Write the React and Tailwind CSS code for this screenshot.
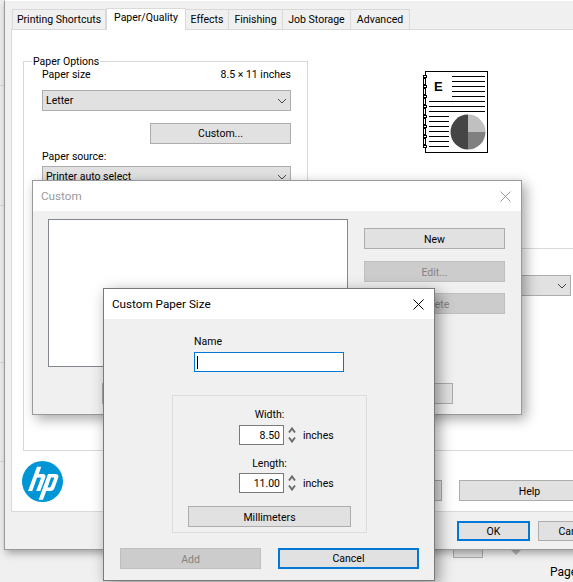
const Btn = ({ className = '', children }) => (
  <div className={`flex items-center justify-center shrink-0 h-[21px] pt-[2px] border border-[#adadad] bg-[#e1e1e1] text-black ${className}`}>
    {children}
  </div>
);

const OffBtn = ({ className = '', children }) => (
  <div className={`flex items-center justify-center shrink-0 h-[21px] pt-[2px] border border-[#bfbfbf] bg-[#cccccc] text-[#838383] ${className}`}>
    {children}
  </div>
);

const FocusBtn = ({ className = '', children }) => (
  <div className={`flex items-center justify-center shrink-0 pt-px border-2 border-[#0078d7] bg-[#e1e1e1] text-black ${className}`}>
    {children}
  </div>
);

const Chevron = () => (
  <svg width="10" height="6" viewBox="0 0 10 6" fill="none" stroke="#444" strokeWidth="1">
    <path d="M1 1l4 4 4-4" />
  </svg>
);

const Select = ({ className = '', children }) => (
  <div className={`flex items-center justify-between h-[21px] pl-[3px] pr-[3px] border border-[#adadad] bg-[#e1e1e1] ${className}`}>
    <span>{children}</span>
    <Chevron />
  </div>
);

const Close = ({ color }) => (
  <svg width="11" height="11" viewBox="0 0 11 11" fill="none" stroke={color} strokeWidth="1">
    <path d="M.5.5l10 10M10.5.5l-10 10" />
  </svg>
);

const Spinner = () => (
  <svg width="8" height="16" viewBox="0 0 8 16" fill="none" stroke="#6d6d6d" strokeWidth="2">
    <path d="M1 5.5l3-4 3 4M1 10.5l3 4 3-4" />
  </svg>
);

const PageIcon = () => {
  const top = [5, 10, 15, 20, 25];
  const wide = [30, 35, 40];
  const short = [45, 50, 55, 60, 65, 70, 75];
  const rings = [5, 15, 25, 35, 45, 55, 65, 75];
  return (
    <svg width="68" height="84" viewBox="0 0 68 84" shapeRendering="crispEdges">
      <rect x="3.5" y="0.5" width="62" height="81" fill="#fff" stroke="#000" />
      {top.map((y) => <path key={y} d={`M30 ${y + 0.5}h33`} stroke="#000" />)}
      {wide.map((y) => <path key={y} d={`M7 ${y + 0.5}h56`} stroke="#000" />)}
      {short.map((y) => <path key={y} d={`M7 ${y + 0.5}h20`} stroke="#000" />)}
      {rings.map((y) => <rect key={y} x="1.5" y={y - 0.5} width="3" height="2" fill="#fff" stroke="#000" />)}
      {rings.slice(0, -1).map((y) => <rect key={y} x="1.5" y={y + 2.5} width="2" height="6" fill="#fff" stroke="#000" />)}
      <text x="12" y="20" fontSize="13" fontWeight="700" fontFamily="'Liberation Sans', sans-serif" fill="#000">E</text>
      <g shapeRendering="auto">
        <path d="M46 61V43.5a17.5 17.5 0 0 0 0 35z" fill="#454545" />
        <path d="M46 43.5V61h17.5A17.5 17.5 0 0 0 46 43.5z" fill="#c0c0c0" />
        <path d="M46 61v17.5A17.5 17.5 0 0 0 63.5 61z" fill="#808080" />
      </g>
    </svg>
  );
};

const HpLogo = () => (
  <svg width="41" height="41" viewBox="0 0 41 41">
    <circle cx="20.5" cy="20.5" r="20.5" fill="#0096d6" />
    <path
      fill="#fff"
      d="M15 5.7h4.3L16.7 13h4.3c2 0 3 1.5 2.4 3.3L18.3 30h-4.1l4.6-12.5c.3-.9-.1-1-.8-1h-3L10.3 30H6z"
    />
    <path
      fill="#fff"
      fillRule="evenodd"
      d="M26 13h7c3 0 4 1.5 3.3 3.5L32.5 27c-.7 2-2 3-4 3h-4.3L21 38.7h-4.3zM29 16.5h2c1 0 1.3.5 1 1.3l-3.3 7.9c-.3.6-.7.8-1.4.8h-1.7z"
    />
  </svg>
);

const SizeRow = ({ value }) => (
  <div className="flex items-center pl-[66px]">
    <div className="flex items-center justify-end w-[45px] h-[20px] pt-px pr-[3px] border border-[#7a7a7a] bg-white">{value}</div>
    <div className="ml-[4px]"><Spinner /></div>
    <span className="ml-[7px] pt-[2px]">inches</span>
  </div>
);

export default function App() {
  return (
    <div className="relative w-[573px] h-[582px] overflow-hidden bg-[#f0f0f0] text-[10.5px] leading-4 text-black font-['Roboto','Noto_Sans',sans-serif]">
      {/* stuff behind the driver window */}
      <div className="absolute left-0 top-[85px] w-[4px] border-t border-[#d9d9d9]" />
      <div className="absolute left-0 top-[205px] w-[4px] border-t border-[#d9d9d9]" />
      <div className="absolute left-0 top-[362px] w-[4px] border-t border-[#d9d9d9]" />
      <div className="absolute left-0 top-[461px] w-[4px] border-t border-[#d9d9d9]" />
      <div className="absolute left-[453px] top-[540px] w-[30px] h-[18px] border border-[#adadad] bg-[#e1e1e1]" />
      <div className="absolute left-[510px] top-[549px] w-0 h-0 border-x-[6px] border-x-transparent border-t-[6px] border-t-[#b5b5b5]" />
      <div className="absolute left-[550px] top-[564px] text-[12px]">Page</div>

      {/* printer properties window */}
      <div className="absolute left-[4px] top-0 w-[640px] h-[550px] flex flex-col border-l border-b border-t border-t-white border-[#999] bg-[#f0f0f0] shadow-[2px_3px_8px_rgba(0,0,0,0.35)]">
        <div className="flex items-end h-[28px] pl-[7px]">
          <div className="flex items-center justify-center w-[94px] h-[20px] border border-b-0 border-[#d9d9d9]">Printing Shortcuts</div>
          <div className="relative z-10 flex justify-center w-[80px] h-[22px] -mb-px pt-[1px] border border-b-0 border-[#d9d9d9] bg-white">Paper/Quality</div>
          <div className="flex items-center justify-center w-[43px] h-[20px] border border-b-0 border-l-0 border-[#d9d9d9]">Effects</div>
          <div className="flex items-center justify-center w-[54px] h-[20px] border border-b-0 border-l-0 border-[#d9d9d9]">Finishing</div>
          <div className="flex items-center justify-center w-[68px] h-[20px] border border-b-0 border-l-0 border-[#d9d9d9]">Job Storage</div>
          <div className="flex items-center justify-center w-[59px] h-[20px] border border-b-0 border-l-0 border-[#d9d9d9]">Advanced</div>
        </div>

        <div className="ml-[6px] h-[483px] border border-[#d9d9d9] bg-white pt-[31px] pl-[11px]">
          <div className="flex h-[390px] border-b border-[#d9d9d9]">
            <div className="relative w-[285px] shrink-0 border border-b-0 border-[#d9d9d9] pl-[18px] pt-[5px]">
              <span className="absolute left-[8px] -top-[8px] bg-white px-px">Paper Options</span>
              <div className="flex justify-between w-[249px]">
                <span>Paper size</span>
                <span>8.5 × 11 inches</span>
              </div>
              <Select className="w-[249px] mt-[7px]">Letter</Select>
              <Btn className="w-[141px] mt-[12px] ml-[108px] !pt-0">Custom...</Btn>
              <div className="mt-[5px]">Paper source:</div>
              <Select className="w-[249px] mt-px">Printer auto select</Select>
            </div>
            <div className="flex-1 flex flex-col">
              <div className="h-[187px] pl-[114px] pt-[10px]"><PageIcon /></div>
              <div className="flex-1 ml-[10px] border-t border-[#d9d9d9] pl-[80px] pt-[26px]">
                <Select className="w-[173px]"> </Select>
              </div>
            </div>
          </div>
          <div className="flex items-start">
            <div className="mt-[10px] ml-[-1px] shrink-0"><HpLogo /></div>
            <Btn className="w-[141px] mt-[29px] ml-[238px]"> </Btn>
            <Btn className="w-[141px] mt-[29px] ml-[17px]">Help</Btn>
          </div>
        </div>

        <div className="flex items-start pl-[452px] pt-[9px]">
          <FocusBtn className="w-[73px] h-[20px]">OK</FocusBtn>
          <Btn className="w-[73px] !h-[20px] ml-[8px]">Cancel</Btn>
        </div>
      </div>

      {/* forms list dialog */}
      <div className="absolute left-[32px] top-[180px] w-[490px] h-[235px] border border-[#999] bg-[#f0f0f0] shadow-[4px_4px_12px_rgba(0,0,0,0.35)]">
        <div className="flex items-center justify-between h-[30px] pl-[8px] pr-[10px] bg-white text-[11.7px] text-[#999]">
          <span>Custom</span>
          <Close color="#999" />
        </div>
        <div className="flex pl-[15px] pt-[8px]">
          <div className="w-[300px] h-[148px] border border-[#828790] bg-white" />
          <div className="flex flex-col w-[141px] ml-[16px] pt-[9px]">
            <Btn>New</Btn>
            <OffBtn className="mt-[12px]">Edit...</OffBtn>
            <OffBtn className="mt-[11px]">Delete</OffBtn>
          </div>
        </div>
        <div className="flex gap-[69px] pl-[69px] mt-[16px]">
          <Btn className="w-[141px]">Close</Btn>
          <Btn className="w-[141px]">Cancel</Btn>
        </div>
      </div>

      {/* custom paper size dialog */}
      <div className="absolute left-[103px] top-[288px] w-[332px] h-[293px] border border-[#7a7a7a] bg-[#f0f0f0] shadow-[4px_4px_14px_rgba(0,0,0,0.4)]">
        <div className="flex items-center justify-between h-[30px] pl-[8px] pr-[10px] bg-white text-[11.7px]">
          <span>Custom Paper Size</span>
          <Close color="#000" />
        </div>
        <div className="pl-[90px] pt-[15px]">
          <div>Name</div>
          <div className="flex items-center w-[150px] h-[20px] mt-[2px] pl-[2px] border border-[#0078d7] bg-white">
            <div className="w-px h-[13px] bg-black" />
          </div>
        </div>
        <div className="w-[195px] h-[138px] ml-[68px] mt-[23px] pt-[11px] border border-[#dcdcdc]">
          <div className="text-center">Width:</div>
          <div className="mt-[2px]"><SizeRow value="8.50" /></div>
          <div className="mt-[11px] text-center">Length:</div>
          <div className="mt-px"><SizeRow value="11.00" /></div>
          <Btn className="w-[163px] ml-[15px] mt-[13px]">Millimeters</Btn>
        </div>
        <div className="flex gap-[17px] pl-[16px] mt-[15px]">
          <OffBtn className="w-[141px]">Add</OffBtn>
          <FocusBtn className="w-[141px] h-[21px]">Cancel</FocusBtn>
        </div>
      </div>
    </div>
  );
}
